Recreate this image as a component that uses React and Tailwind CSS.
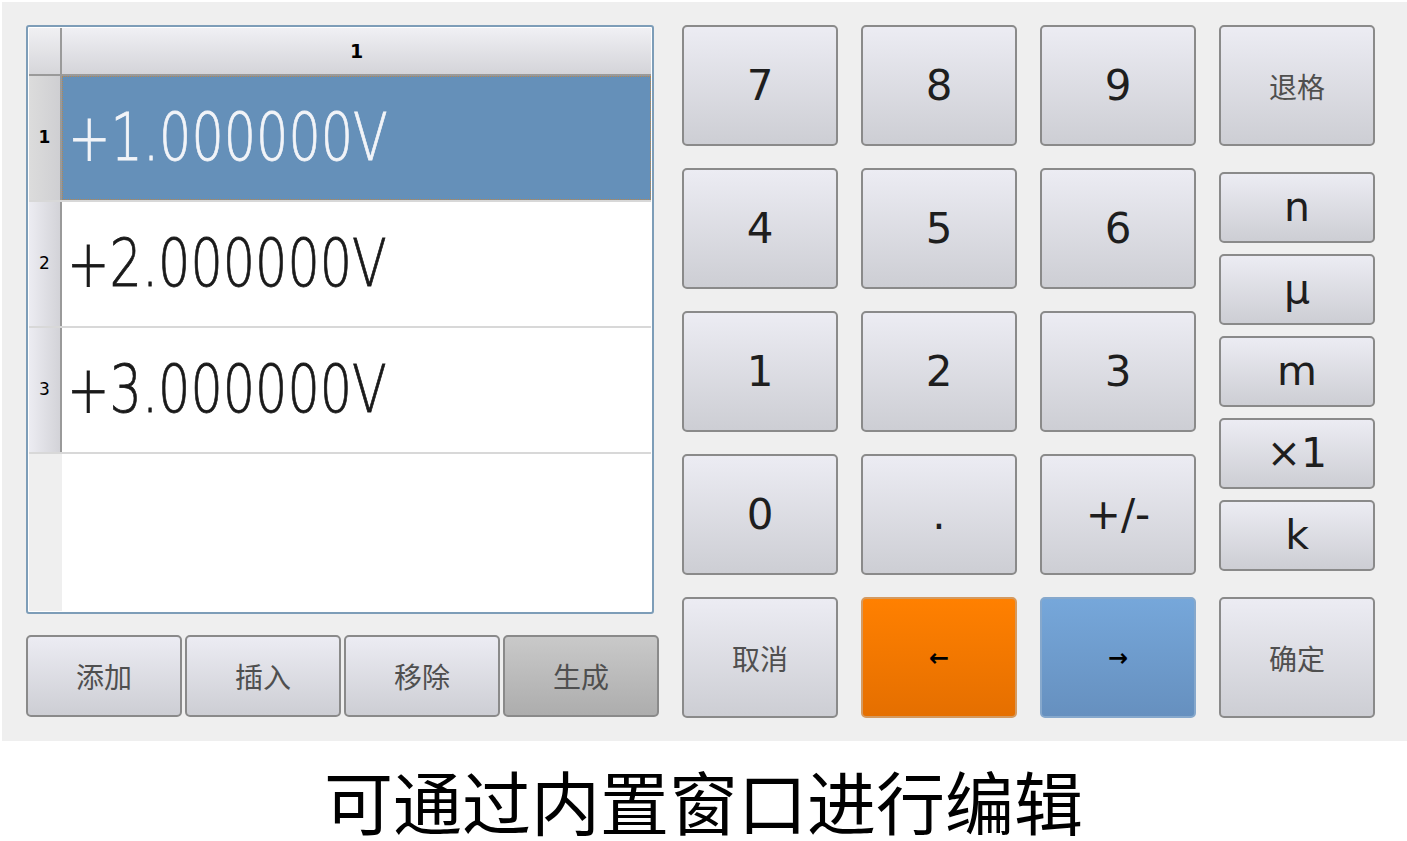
import React from 'react';

const btn = "flex items-center justify-center rounded-[5px] border-2 border-[#8a8a8a] bg-linear-to-b from-[#ececf3] to-[#cdced4]";
const digit = "font-['DejaVu_Sans',sans-serif] text-[42px] text-[#1e1e1e]";
const cjk = "font-['Noto_Sans_CJK_SC',sans-serif] text-[28px] text-[#4f4f4f]";
const unit = "font-['DejaVu_Sans',sans-serif] text-[41px] leading-none text-[#1e1e1e]";

const Key = ({ children, className = '', label = digit }) => (
    <div className={`${btn} ${className}`}>
        <span className={label}>{children}</span>
    </div>
);

const rows = ['+1.000000V', '+2.000000V', '+3.000000V'];

const App = () => {
    return (
        <div className="w-[1407px] h-[841px] bg-white overflow-hidden">
            <div className="ml-[2px] mt-[2px] h-[739px] bg-[#efefef] flex pl-[24px] pt-[23px] gap-[23px]">
                {/* table + actions */}
                <div className="flex flex-col w-[633px]">
                    <div className="w-[628px] h-[589px] border-2 border-[#7d9db8] rounded-[3px] bg-white p-[1px] flex flex-col">
                        <div className="flex h-[48px] border-b-2 border-[#9a9a9a]">
                            <div className="w-[33px] border-r-2 border-[#9a9a9a] bg-linear-to-b from-[#f0f0f3] to-[#d6d6da]" />
                            <div className="flex-1 flex items-center justify-center bg-linear-to-b from-[#f0f0f4] to-[#d4d4d9]">
                                <span className="font-['DejaVu_Sans',sans-serif] font-bold text-[19px] text-black">1</span>
                            </div>
                        </div>
                        {rows.map((v, i) => (
                            <div key={v} className="flex h-[126px] border-b-2 border-[#d8d8d8]">
                                <div className={`w-[33px] border-r-2 border-[#9a9a9a] flex items-center justify-center ${i === 0 ? 'bg-linear-to-r from-[#dcdcdc] to-[#cfcfd2]' : 'bg-linear-to-r from-[#ececf2] to-[#d3d3d8]'}`}>
                                    <span className={`font-['DejaVu_Sans',sans-serif] text-[17px] text-black ${i === 0 ? 'font-bold' : ''}`}>{i + 1}</span>
                                </div>
                                <div className={`flex-1 flex items-center pl-[5px] overflow-hidden ${i === 0 ? 'bg-[#6590b9] border border-dotted border-[#b88850]' : 'bg-white'}`}>
                                    <span className={`inline-block origin-left scale-x-[0.77] whitespace-nowrap font-['DejaVu_Sans',sans-serif] font-extralight text-[66px] leading-none [-webkit-text-stroke:0.8px] ${i === 0 ? 'text-[#f2f4f8]' : 'text-[#1a1a1a]'}`}>{v}</span>
                                </div>
                            </div>
                        ))}
                        <div className="flex flex-1">
                            <div className="w-[33px] bg-[#efefef]" />
                            <div className="flex-1 bg-white" />
                        </div>
                    </div>
                    <div className="flex gap-[3px] mt-[21px]">
                        <Key className="w-[156px] h-[82px]" label={`${cjk} text-[24px]`}>添加</Key>
                        <Key className="w-[156px] h-[82px]" label={`${cjk} text-[24px]`}>插入</Key>
                        <Key className="w-[156px] h-[82px]" label={`${cjk} text-[24px]`}>移除</Key>
                        <div className="w-[156px] h-[82px] flex items-center justify-center rounded-[5px] border-2 border-[#8a8a8a] bg-linear-to-b from-[#c9c9c9] to-[#adadad]">
                            <span className={`${cjk} text-[24px]`}>生成</span>
                        </div>
                    </div>
                </div>

                {/* keypad */}
                <div className="grid grid-cols-[156px_156px_156px_156px] grid-rows-[121px_121px_121px_121px_121px] gap-x-[23px] gap-y-[22px]">
                    <Key>7</Key>
                    <Key>8</Key>
                    <Key>9</Key>
                    <Key label={cjk}>退格</Key>

                    <Key>4</Key>
                    <Key>5</Key>
                    <Key>6</Key>
                    <div className="row-span-3 flex flex-col gap-[11px] pt-[4px]">
                        {['n', 'μ', 'm', '×1', 'k'].map(u => (
                            <Key key={u} className="h-[71px]" label={unit}>{u}</Key>
                        ))}
                    </div>

                    <Key>1</Key>
                    <Key>2</Key>
                    <Key>3</Key>

                    <Key>0</Key>
                    <Key>.</Key>
                    <Key>+/-</Key>

                    <Key label={cjk}>取消</Key>
                    <div className="flex items-center justify-center rounded-[5px] border-2 border-[#d49a60] bg-linear-to-b from-[#ff8000] to-[#e56f00]">
                        <span className="font-['DejaVu_Sans',sans-serif] font-bold text-[24px] text-black">←</span>
                    </div>
                    <div className="flex items-center justify-center rounded-[5px] border-2 border-[#86a8cc] bg-linear-to-b from-[#76a7da] to-[#6690bf]">
                        <span className="font-['DejaVu_Sans',sans-serif] font-bold text-[24px] text-black">→</span>
                    </div>
                    <Key label={cjk}>确定</Key>
                </div>
            </div>
            <div className="h-[100px] pt-[23px] text-center font-['Noto_Sans_CJK_SC',sans-serif] text-[69px] leading-[72px] text-black">
                可通过内置窗口进行编辑
            </div>
        </div>
    );
};

export default App;
